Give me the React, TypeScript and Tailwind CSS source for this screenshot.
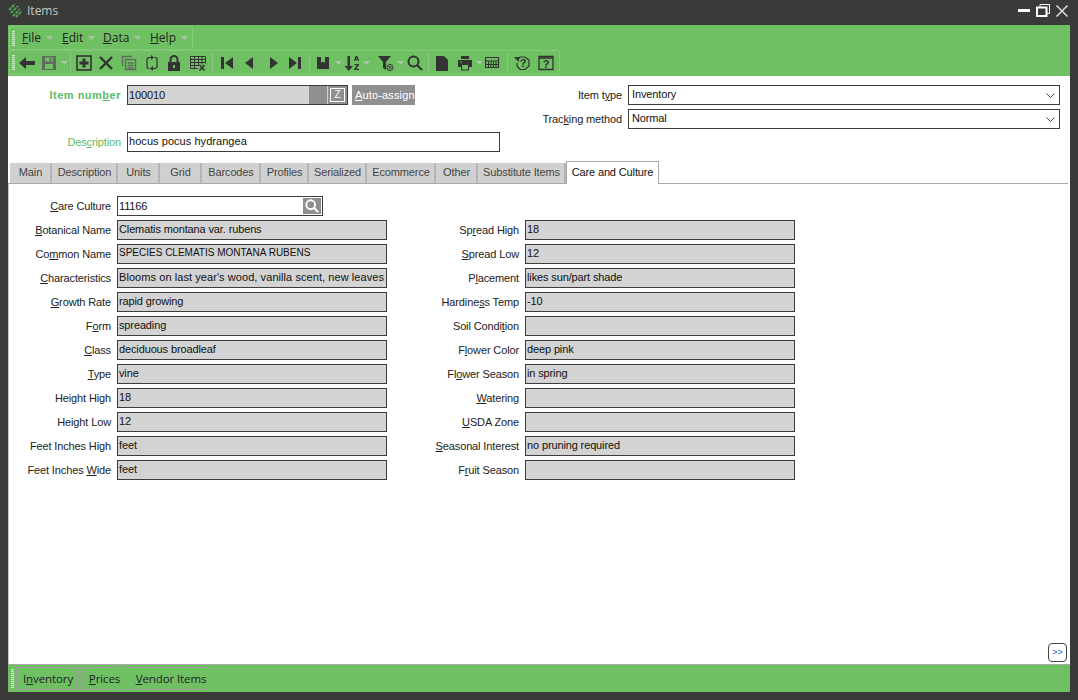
import React from "react";

const DARK = "#333";

function Caret() {
  return (
    <svg width="7" height="4" viewBox="0 0 7 4">
      <path d="M0 0h7L3.5 4z" fill="#a9c9a6" />
    </svg>
  );
}

function Grip({ h }: { h: string }) {
  return (
    <div className={`w-[3px] ${h} shrink-0 bg-[repeating-linear-gradient(to_bottom,#c9e3c6_0,#c9e3c6_1px,#8fc98c_1px,#8fc98c_2px)]`} />
  );
}

function Sep() {
  return <div className="w-px h-[20px] bg-[#8cc487] mx-px shrink-0" />;
}

const icons: Record<string, React.ReactNode> = {
  back: <path d="M0 8l7-6v4h9v4H7v4z" fill={DARK} />,
  save: (
    <path fillRule="evenodd" d="M1 1h14v14H1zM4 2.5v4h8v-4zM4 9v5h8V9zM8.5 3h2v3h-2z" fill="#5f6b5e" />
  ),
  plus: (
    <g>
      <rect x="1" y="1" width="14" height="14" fill="none" stroke={DARK} strokeWidth="1.6" />
      <path d="M6.5 3.5h3v3h3v3h-3v3h-3v-3h-3v-3h3z" fill={DARK} />
    </g>
  ),
  x: <path d="M2 2l12 12M14 2L2 14" stroke={DARK} strokeWidth="2.4" fill="none" />,
  copy: (
    <g fill="none" stroke="#5f6b5e" strokeWidth="1.4">
      <path d="M1.5 11V1.5H11" />
      <rect x="4.5" y="4.5" width="10" height="10" />
      <path d="M6.5 8h6M6.5 10.5h6M6.5 13h6" />
    </g>
  ),
  refresh: (
    <g fill="none" stroke={DARK} strokeWidth="1.2">
      <path d="M7 2.5H4.5L3 4v8.5l1 1h1.5" />
      <path d="M9 13.5h2.5L13 12V3.5l-1-1h-1.5" />
      <path d="M7 0l3 2.5L7 5zM9 11l-3 2.5L9 16z" fill={DARK} stroke="none" />
    </g>
  ),
  lock: (
    <g>
      <path d="M4.5 7V4.5a3.5 3.5 0 017 0V7" fill="none" stroke={DARK} strokeWidth="2" />
      <path fillRule="evenodd" d="M2 7h12v9H2zM7 10v3h2v-3z" fill={DARK} />
    </g>
  ),
  table: (
    <g fill="none" stroke={DARK} strokeWidth="1">
      <path d="M.5 1.5h15M.5 4.5h15M.5 7.5h15M.5 10.5h8M.5 13.5h7M.5 1.5v12M4.5 1.5v12M8.5 1.5v9M12 1.5v8M15.5 1.5v7" />
      <path d="M9.5 10l5 5.5M14.5 10l-5 5.5" strokeWidth="1.5" />
    </g>
  ),
  first: <path d="M2 2h3v12H2zM14 2v12L6 8z" fill={DARK} />,
  prev: <path d="M12 2v12L4 8z" fill={DARK} />,
  next: <path d="M4 2v12l8-6z" fill={DARK} />,
  last: <path d="M2 2v12l8-6zM11 2h3v12h-3z" fill={DARK} />,
  bookmark: <path d="M2 2h4v6l2-1.5L10 8V2h4v12H2z" fill={DARK} />,
  sort: (
    <g fill={DARK}>
      <path d="M3.5 1h2.5v10h3l-4.2 5L.5 11h3z" />
      <path d="M11.5 1h2l1.5 5h-1.2l-.3-1h-2l-.3 1H10zM12 4h1l-.5-1.8zM10.5 9h4.5v1.2l-3 3.6h3V15h-4.8v-1.2l3-3.6h-2.7z" />
    </g>
  ),
  filter: (
    <g>
      <path d="M0 1h13L8 7v8l-3-2V7z" fill={DARK} />
      <circle cx="12" cy="12.5" r="3" fill="none" stroke={DARK} strokeWidth="1" />
      <path d="M10.5 11l3 3M13.5 11l-3 3" stroke={DARK} strokeWidth="1" />
    </g>
  ),
  search: (
    <g fill="none" stroke={DARK} strokeWidth="2">
      <circle cx="6.5" cy="6.5" r="5" />
      <path d="M10 10l5 5" />
    </g>
  ),
  doc: <path d="M2 1h8l4 4v11H2z" fill={DARK} />,
  print: (
    <g fill={DARK}>
      <path d="M4 1h8v3H4z" />
      <path fillRule="evenodd" d="M1 5h14v7h-3v3.5H4V12H1zM5 10v4.5h6V10zM3 6.5v1h2v-1z" />
    </g>
  ),
  calc: (
    <g fill="none" stroke={DARK} strokeWidth="1">
      <path d="M.5 2.5h13v10H.5zM.5 6h13" strokeWidth="1.2" />
      <path d="M3.5 6.5v6M6 6.5v6M8.5 6.5v6M11 6.5v6M.5 9.5h13" />
    </g>
  ),
};

function Ico({ name, size = 16 }: { name: string; size?: number }) {
  return (
    <svg width={size} height={size} viewBox="0 0 16 16">
      {icons[name]}
    </svg>
  );
}

function HelpA() {
  return (
    <svg width="16" height="16" viewBox="0 0 16 16">
      <path d="M3 5L6 2h5l4 3v6l-4 3.5H6L3 11V8" fill="none" stroke={DARK} strokeWidth="1.2" />
      <path d="M0 2h5v5z" fill={DARK} />
      <text x="9" y="12" textAnchor="middle" fontSize="11" fontWeight="700" fontFamily="Liberation Sans, sans-serif" fill={DARK}>?</text>
    </svg>
  );
}

function HelpB() {
  return (
    <svg width="16" height="16" viewBox="0 0 16 16">
      <path d="M1 1.5h14v13H1z" fill="none" stroke={DARK} strokeWidth="1.3" />
      <path d="M1 3h14" stroke={DARK} strokeWidth="1.5" />
      <text x="8" y="13" textAnchor="middle" fontSize="11" fontWeight="700" fontFamily="Liberation Sans, sans-serif" fill={DARK}>?</text>
    </svg>
  );
}

function Slot({ w, children }: { w: string; children?: React.ReactNode }) {
  return <div className={`${w} h-full flex items-center justify-center shrink-0`}>{children}</div>;
}

function Menu({ u, post, w }: { u: string; post: string; w: string }) {
  return (
    <div className={`${w} flex items-center gap-[5px] shrink-0`}>
      <span className="text-[12px] text-[#222] tracking-normal font-['Open_Sans',sans-serif]">
        <u>{u}</u>
        {post}
      </span>
      <Caret />
    </div>
  );
}

type F = { pre: string; u: string; post: string; value: string; cls?: string };

const leftFields: F[] = [
  { pre: "", u: "B", post: "otanical Name", value: "Clematis montana var. rubens" },
  { pre: "Co", u: "m", post: "mon Name", value: "SPECIES CLEMATIS MONTANA RUBENS", cls: "text-[10px] tracking-normal" },
  { pre: "", u: "C", post: "haracteristics", value: "Blooms on last year's wood, vanilla scent, new leaves", cls: "tracking-[0.07px]" },
  { pre: "", u: "G", post: "rowth Rate", value: "rapid growing" },
  { pre: "F", u: "o", post: "rm", value: "spreading" },
  { pre: "", u: "C", post: "lass", value: "deciduous broadleaf" },
  { pre: "", u: "T", post: "ype", value: "vine" },
  { pre: "Hei", u: "g", post: "ht High", value: "18" },
  { pre: "Hei", u: "g", post: "ht Low", value: "12" },
  { pre: "Feet Inches Hi", u: "g", post: "h", value: "feet" },
  { pre: "Feet Inches ", u: "W", post: "ide", value: "feet" },
];

const rightFields: F[] = [
  { pre: "Sp", u: "r", post: "ead High", value: "18" },
  { pre: "", u: "S", post: "pread Low", value: "12" },
  { pre: "P", u: "l", post: "acement", value: "likes sun/part shade" },
  { pre: "Hardine", u: "s", post: "s Temp", value: "-10" },
  { pre: "Soil Condi", u: "t", post: "ion", value: "" },
  { pre: "F", u: "l", post: "ower Color", value: "deep pink" },
  { pre: "Fl", u: "o", post: "wer Season", value: "in spring" },
  { pre: "", u: "W", post: "atering", value: "" },
  { pre: "", u: "U", post: "SDA Zone", value: "" },
  { pre: "", u: "S", post: "easonal Interest", value: "no pruning required" },
  { pre: "F", u: "r", post: "uit Season", value: "" },
];

const tabs: [string, string][] = [
  ["Main", "w-[42px]"],
  ["Description", "w-[66px]"],
  ["Units", "w-[42px]"],
  ["Grid", "w-[42px]"],
  ["Barcodes", "w-[59px]"],
  ["Profiles", "w-[48px]"],
  ["Serialized", "w-[58px]"],
  ["Ecommerce", "w-[69px]"],
  ["Other", "w-[42px]"],
  ["Substitute Items", "w-[88px]"],
];

function Field({ f, labelW }: { f: F; labelW: string }) {
  return (
    <div className="flex h-[20px] items-center">
      <div className={`${labelW} pr-[6px] text-right text-[#222] whitespace-nowrap`}>
        {f.pre}
        <u>{f.u}</u>
        {f.post}
      </div>
      <div
        className={`w-[270px] h-[20px] bg-[#d3d3d3] border border-[#3c3c3c] pl-px leading-[16px] text-[#111] whitespace-nowrap overflow-hidden ${f.cls ?? ""}`}
      >
        {f.value}
      </div>
    </div>
  );
}

function Select({ pre, u, post, value }: { pre: string; u: string; post: string; value: string }) {
  return (
    <div className="flex items-center h-[20px]">
      <div className="flex-1 pr-[6px] text-right text-[#222]">
        {pre}
        <u>{u}</u>
        {post}
      </div>
      <div className="w-[432px] h-[20px] border border-[#3c3c3c] bg-white pl-[3px] pr-[4px] flex items-center justify-between text-[#111]">
        <span className="-mt-[2px]">{value}</span>
        <svg width="9" height="5" viewBox="0 0 9 5">
          <path d="M.5.5l4 4 4-4" fill="none" stroke="#444" />
        </svg>
      </div>
    </div>
  );
}

export default function App() {
  return (
    <div className="w-[1078px] h-[700px] bg-[#3a3b39] overflow-hidden flex flex-col pl-[8px] pr-[8px] pb-[8px] font-['Liberation_Sans',Arial,sans-serif] text-[11px] tracking-[-0.13px]">
      <div className="h-[25px] -ml-[8px] -mr-[8px] pl-[8px] pr-[10px] pb-[4px] flex items-center shrink-0">
        <svg width="15" height="15" viewBox="0 0 15 15" className="mr-[4px]">
          <g stroke="#4f9a55" strokeWidth="2.2" strokeDasharray="3 1">
            <path d="M1 7L7 1M3 10l7-7M5 13l7-7M8 14l6-6" />
          </g>
        </svg>
        <span className="text-[12px] text-[#c4c8c8] font-['Open_Sans',sans-serif] tracking-normal">Items</span>
        <div className="ml-auto flex items-center gap-[6px]">
          <div className="w-[12px] h-[3px] bg-white" />
          <svg width="14" height="13" viewBox="0 0 14 13">
            <path d="M4 2.5V.5h9.5v9H11" fill="none" stroke="#fff" />
            <path d="M1 3.5h9.5v8.5H1z" fill="none" stroke="#fff" strokeWidth="2" />
          </svg>
          <svg width="12" height="12" viewBox="0 0 12 12">
            <path d="M.5.5l11 11M11.5.5l-11 11" stroke="#e8e8e8" strokeWidth="1.4" />
          </svg>
        </div>
      </div>

      <div className="h-[51px] bg-[#6fbf63] shrink-0 flex flex-col pl-px pt-px">
        <div className="w-[184px] h-[24px] border border-[#84c97a] rounded-[2px] flex items-center pl-[2px]">
          <Grip h="h-[15px]" />
          <div className="w-[7px]" />
          <Menu u="F" post="ile" w="w-[40px]" />
          <Menu u="E" post="dit" w="w-[41px]" />
          <Menu u="D" post="ata" w="w-[47px]" />
          <Menu u="H" post="elp" w="w-[40px]" />
        </div>
        <div className="w-[551px] h-[25px] border border-[#84c97a] rounded-[2px] flex items-center pl-[2px]">
          <Grip h="h-[15px]" />
          <Slot w="w-[23px]"><Ico name="back" /></Slot>
          <Slot w="w-[22px]"><Ico name="save" /></Slot>
          <Slot w="w-[9px]"><Caret /></Slot>
          <Sep />
          <Slot w="w-[23px]"><Ico name="plus" /></Slot>
          <Slot w="w-[22px]"><Ico name="x" /></Slot>
          <Slot w="w-[24px]"><Ico name="copy" /></Slot>
          <Slot w="w-[22px]"><Ico name="refresh" /></Slot>
          <Slot w="w-[22px]"><Ico name="lock" /></Slot>
          <Slot w="w-[26px]"><Ico name="table" /></Slot>
          <Sep />
          <Slot w="w-[26px]"><Ico name="first" /></Slot>
          <Slot w="w-[18px]"><Ico name="prev" /></Slot>
          <Slot w="w-[6px]" />
          <Slot w="w-[20px]"><Ico name="next" /></Slot>
          <Slot w="w-[22px]"><Ico name="last" /></Slot>
          <Slot w="w-[2px]" />
          <Sep />
          <Slot w="w-[24px]"><Ico name="bookmark" /></Slot>
          <Slot w="w-[7px]"><Caret /></Slot>
          <Slot w="w-[20px]"><Ico name="sort" /></Slot>
          <Slot w="w-[8px]"><Caret /></Slot>
          <Slot w="w-[6px]" />
          <Slot w="w-[20px]"><Ico name="filter" /></Slot>
          <Slot w="w-[8px]"><Caret /></Slot>
          <Slot w="w-[22px]"><Ico name="search" /></Slot>
          <Slot w="w-[1px]" />
          <Sep />
          <Slot w="w-[24px]"><Ico name="doc" /></Slot>
          <Slot w="w-[22px]"><Ico name="print" /></Slot>
          <Slot w="w-[7px]"><Caret /></Slot>
          <Slot w="w-[20px]"><Ico name="calc" /></Slot>
          <Slot w="w-[3px]" />
          <Sep />
          <Slot w="w-[26px]"><HelpA /></Slot>
          <Slot w="w-[22px]"><HelpB /></Slot>
        </div>
      </div>

      <div className="flex-1 bg-white flex flex-col min-h-0">
        <div className="flex pt-[9px] h-[84px] shrink-0">
          <div className="w-[492px] flex flex-col gap-[27px]">
            <div className="flex items-center h-[20px]">
              <div className="w-[119px] pr-[6px] text-right font-bold tracking-[0.5px] text-[#5cbc66] whitespace-nowrap">
                Item num<u>b</u>er
              </div>
              <div className="w-[221px] h-[20px] border border-[#3c3c3c] bg-[#d3d3d3] flex items-center justify-between pl-px text-[#111]">
                <span>100010</span>
                <div className="flex items-center h-full gap-px">
                  <div className="w-[18px] h-full bg-[#8f8f8f]" />
                  <div className="w-[19px] h-full bg-[#8f8f8f] p-[2px]">
                    <div className="w-full h-full border border-white text-white text-[10px] leading-[12px] text-center tracking-normal">Z</div>
                  </div>
                </div>
              </div>
              <div className="ml-[4px] w-[63px] h-[20px] bg-[#8f8f8f] text-white pl-[3px] leading-[20px] tracking-[0.15px] whitespace-nowrap">
                <u>A</u>uto-assign
              </div>
            </div>
            <div className="flex items-center h-[20px]">
              <div className="w-[119px] pr-[6px] text-right text-[#5cbc66]">
                Des<u>c</u>ription
              </div>
              <div className="w-[373px] h-[20px] border border-[#3c3c3c] bg-white pl-px leading-[16px] text-[#111] tracking-[0.05px]">
                hocus pocus hydrangea
              </div>
            </div>
          </div>
          <div className="flex-1 pr-[10px] flex flex-col gap-[4px]">
            <Select pre="Item t" u="y" post="pe" value="Inventory" />
            <Select pre="Trac" u="k" post="ing method" value="Normal" />
          </div>
        </div>

        <div className="h-[24px] flex items-end shrink-0 pl-[2px] mr-[2px] border-b border-[#a9a9a9]">
          {tabs.map(([name, w]) => (
            <div
              key={name}
              className={`${w} h-[20px] pl-px bg-[#d0d0d0] border-r-2 border-[#b4b4b4] text-[#444] text-center leading-[18px] whitespace-nowrap shrink-0`}
            >
              {name}
            </div>
          ))}
          <div className="w-[93px] h-[23px] -mb-px bg-white border border-b-0 border-[#a9a9a9] text-[#111] text-center leading-[20px] whitespace-nowrap shrink-0">
            Care and Culture
          </div>
        </div>

        <div className="flex-1 min-h-0 flex flex-col pt-[12px] pr-[3px] border-l border-[#c8c8c8]">
          <div className="flex items-center h-[20px]">
            <div className="w-[108px] pr-[6px] text-right text-[#222]">
              <u>C</u>are Culture
            </div>
            <div className="w-[206px] h-[20px] border border-[#3c3c3c] bg-white pl-px pr-px flex items-center justify-between text-[#111]">
              <span>11166</span>
              <div className="w-[18px] h-[16px] bg-[#8f8f8f] flex items-center justify-center">
                <svg width="14" height="14" viewBox="0 0 16 16" fill="none" stroke="#fff" strokeWidth="2.2">
                  <circle cx="6.5" cy="6.5" r="5" />
                  <path d="M10 10l5 5" />
                </svg>
              </div>
            </div>
          </div>
          <div className="flex mt-[4px]">
            <div className="flex flex-col gap-[4px]">
              {leftFields.map((f) => (
                <Field key={f.pre + f.u + f.post} f={f} labelW="w-[108px]" />
              ))}
            </div>
            <div className="flex flex-col gap-[4px]">
              {rightFields.map((f) => (
                <Field key={f.pre + f.u + f.post} f={f} labelW="w-[138px]" />
              ))}
            </div>
          </div>
          <div className="mt-auto mb-[2px] self-end w-[19px] h-[19px] border border-[#444] rounded-[4px] text-[#0a5bd0] text-[9px] leading-[16px] text-center tracking-normal">
            &gt;&gt;
          </div>
        </div>
      </div>

      <div className="h-[28px] shrink-0 bg-[#6fbf63] border-t border-[#a9a9a9] flex items-center pl-[3px]">
        <Grip h="h-[19px]" />
        <div className="flex items-center gap-[5px] ml-[2px]">
          {[
            ["I", "n", "ventory", "w-[61px]"],
            ["", "P", "rices", "w-[42px]"],
            ["", "V", "endor Items", "w-[81px]"],
          ].map(([pre, u, post, w]) => (
            <div
              key={post}
              className={`${w} h-[23px] pl-[3px] border border-[#98a098] flex items-center justify-center text-[11.5px] text-[#222] tracking-[-0.1px] font-['Open_Sans',sans-serif]`}
            >
              <span>
                {pre}
                <u>{u}</u>
                {post}
              </span>
            </div>
          ))}
        </div>
      </div>
    </div>
  );
}
